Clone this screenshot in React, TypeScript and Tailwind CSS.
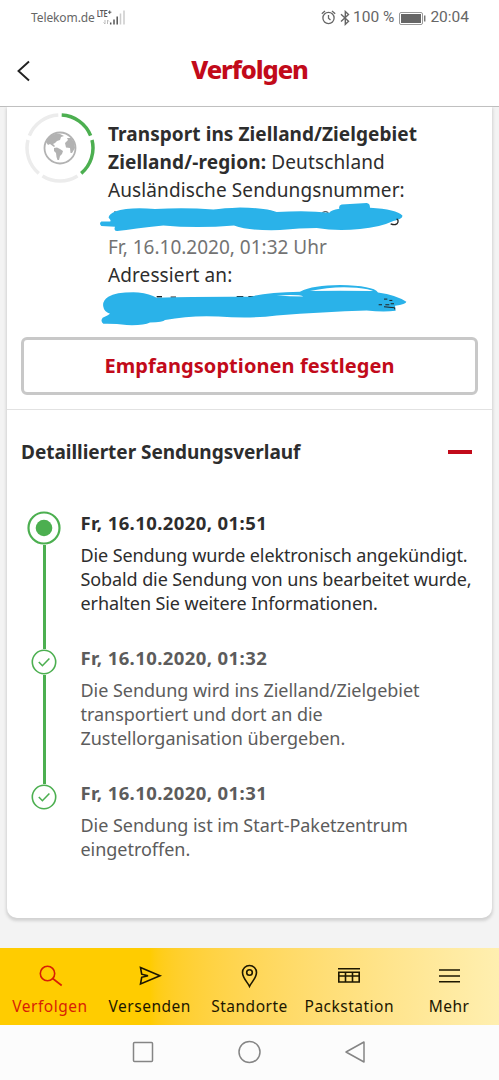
import type { ReactNode } from "react";

const EVENTS = [
  {
    date: "Fr, 16.10.2020, 01:51",
    lines: [
      "Die Sendung wurde elektronisch angekündigt.",
      "Sobald die Sendung von uns bearbeitet wurde,",
      "erhalten Sie weitere Informationen.",
    ],
    current: true,
  },
  {
    date: "Fr, 16.10.2020, 01:32",
    lines: [
      "Die Sendung wird ins Zielland/Zielgebiet",
      "transportiert und dort an die",
      "Zustellorganisation übergeben.",
    ],
  },
  {
    date: "Fr, 16.10.2020, 01:31",
    lines: ["Die Sendung ist im Start-Paketzentrum", "eingetroffen."],
  },
];

function StatusBar() {
  return (
    <div className="flex h-9 shrink-0 items-center justify-between pr-[30px] pl-[31px] font-[Roboto,sans-serif] text-[#666]">
      <div className="flex items-center gap-[2px]">
        <span className="font-['Noto_Sans',sans-serif] text-[12px] tracking-[-0.1px]">Telekom.de</span>
        <svg width="29" height="18" viewBox="0 0 29 18">
          <text x="0" y="7.800" fontSize="9" fontWeight="700" fill="#555" textLength="10.500" lengthAdjust="spacingAndGlyphs">
            LTE
          </text>
          <path d="M11 3.200h3.400M12.700 1.500v3.400" stroke="#555" />
          <path d="M8 11v4M6.500 13.500 8 15M10.500 15v-4M12 12.500 10.500 11" stroke="#bbb" fill="none" />
          <path d="M13.700 15.500v-2M17 15.500v-5M20.200 15.500v-8" stroke="#555" strokeWidth="1.500" />
          <path d="M23.500 15.500v-11M27 15.500v-14" stroke="#ccc" strokeWidth="1.500" />
        </svg>
      </div>
      <div className="flex items-center text-[15.500px]">
        <svg width="15" height="16" viewBox="0 0 15 16" fill="none" stroke="currentColor" strokeWidth="1.300">
          <circle cx="7.500" cy="8" r="5.600" />
          <path d="M7.500 5v3.300l2 1.700M.8 3.700 4 1M14.200 3.700 11 1" />
        </svg>
        <svg className="ml-1" width="11" height="16" viewBox="0 0 11 16" fill="none" stroke="currentColor" strokeWidth="1.400">
          <path d="M1 4.200 8.500 11.300 5.300 14.300V1.500L8.500 4.500 1 11.600" />
        </svg>
        <span className="ml-[2px] whitespace-nowrap">100 %</span>
        <svg className="ml-[5px]" width="27" height="13" viewBox="0 0 27 13">
          <rect x=".5" y=".5" width="23" height="12" rx="1.500" fill="none" stroke="#999" />
          <rect x="2" y="2" width="20" height="9" fill="#666" />
          <path d="M25.700 3.500v6" stroke="#777" strokeWidth="1.500" />
        </svg>
        <span className="ml-1">20:04</span>
      </div>
    </div>
  );
}

function Globe() {
  return (
    <svg className="shrink-0" width="70" height="70" viewBox="-35 -35 70 70" fill="none">
      <g strokeWidth="3.500">
        <path d="M1.700 -32.950A33 33 0 0 1 30.600 -12.400" stroke="#4caf50" />
        <path d="M32 -8A33 33 0 0 1 21.200 25.300" stroke="#4caf50" />
        <path d="M17.500 28A33 33 0 0 1 -17.500 28" stroke="#ececec" />
        <path d="M-21.200 25.300A33 33 0 0 1 -32 -8" stroke="#ececec" />
        <path d="M-30.600 -12.400A33 33 0 0 1 -1.700 -32.950" stroke="#ececec" />
      </g>
      <circle r="15.500" stroke="#b2b2b2" strokeWidth="1.800" />
      <g fill="#b2b2b2">
        <path d="M-14-6-10-12-4-14.500 0-14 4-12 1-11 0-8-3-7-5-5-7-4-5-2-6-1-10-4-12-3Z" />
        <path d="M-6 0-3-.5 0 1 3 3 2 6 0 8-1 12-2.500 12-3.500 9-4 5-6 3Z" />
        <path d="M5-5 8-8 7-10 11-10 14-6 15 0 12 5 10.500 5 10 0 6-.5Z" />
      </g>
    </svg>
  );
}

function NumberScribble() {
  return (
    <svg className="-ml-[18px] block h-[28.200px] w-[330px] overflow-visible" viewBox="0 27 990 84">
      <path d="M75 45v10M532 48q11-5 20 0M697 49q10-5 18 0" stroke="#222" strokeWidth="3" fill="none" />
      <path
        d="M34 76Q26 82 34 90L75 92Q70 106 82 105Q130 98 220 88Q320 98 432 88Q480 105 570 102Q630 96 680 96Q740 106 810 99Q870 94 910 75Q940 68 937 58Q920 40 840 35Q840 22 830 21L755 25Q745 28 748 38Q722 42 718 50Q650 42 560 48Q530 36 450 34Q400 36 370 40Q280 34 195 39Q120 32 75 46Q55 55 56 65Q65 75 60 76Z"
        fill="#2ab2e9"
      />
      <path d="M902 83Q920 90 924 78Q926 72 920 68" stroke="#222" strokeWidth="4" fill="none" />
    </svg>
  );
}

function AddressScribble() {
  return (
    <svg className="-ml-[18px] block h-[28.200px] w-[330px] overflow-visible" viewBox="0 282 990 84">
      <path d="M200 305h16M242 306h16M440 305h20M475 305h16M628 305h12" stroke="#222" strokeWidth="4" />
      <path
        d="M40 335Q36 318 55 305Q80 290 145 292Q180 296 200 308Q330 304 480 305Q530 292 630 290Q670 270 750 270Q850 272 864 292Q920 300 949 320Q948 328 915 332L917 347Q880 352 830 346Q700 350 560 361Q480 372 385 364Q300 360 225 375Q220 382 180 382Q160 392 110 390Q75 385 40 386Q30 378 38 368Q55 360 60 356Q42 350 40 335Z"
        fill="#2ab2e9"
      />
      <path d="M560 301Q630 298 640 304Q600 304 560 301ZM660 288Q730 272 800 278Q840 282 850 288Q750 286 660 288Z" fill="#fff" />
      <path d="M882 312h10M898 316h9M866 329h10M886 329h12M902 326h10M882 335l32 3v5" stroke="#222" strokeWidth="3" fill="none" />
    </svg>
  );
}

function Shipment() {
  return (
    <section className="border-b border-[#e2e2e2] px-[14px] pt-[6px] pb-[14px]">
      <div className="flex h-[224px] gap-[13px] pl-[4px]">
        <Globe />
        <div className="pt-[7px] text-[19px] leading-[28.200px] tracking-[0.1px] whitespace-nowrap text-[#2d2d2d]">
          <p className="font-bold tracking-[0.07px]">Transport ins Zielland/Zielgebiet</p>
          <p className="tracking-[0.14px]">
            <b>Zielland/-region:</b> Deutschland
          </p>
          <p>Ausländische Sendungsnummer:</p>
          <NumberScribble />
          <p className="tracking-normal text-[#737373]">Fr, 16.10.2020, 01:32 Uhr</p>
          <p>Adressiert an:</p>
          <AddressScribble />
        </div>
      </div>
      <button className="block h-[58px] w-full rounded-md border-[3px] border-[#c8c8c8] text-[20px] font-bold tracking-[0.08px] text-[#c20a1a]">
        Empfangsoptionen festlegen
      </button>
    </section>
  );
}

function Marker({ current }: { current?: boolean }) {
  if (current) {
    return (
      <svg className="block shrink-0" width="34" height="34" viewBox="0 0 34 34">
        <circle cx="17" cy="17" r="15.500" fill="#fff" stroke="#4caf50" strokeWidth="2.200" />
        <circle cx="17" cy="17" r="8.300" fill="#4caf50" />
      </svg>
    );
  }
  return (
    <svg className="block shrink-0" width="26" height="26" viewBox="0 0 26 26" fill="none" stroke="#4caf50">
      <circle cx="13" cy="13" r="11.700" strokeWidth="1.600" />
      <path d="m7.800 13 3.600 3.700 7-7.200" strokeWidth="1.600" />
    </svg>
  );
}

function History() {
  return (
    <section className="px-[14px]">
      <div className="flex h-[84px] items-center justify-between pr-[6px]">
        <h2 className="text-[19px] font-bold tracking-[-0.03px] whitespace-nowrap text-[#2d2d2d]">
          Detaillierter Sendungsverlauf
        </h2>
        <span className="h-1 w-6 bg-[#c20a1a]" />
      </div>
      <ol className="pt-[17px]">
        {EVENTS.map((event, i) => (
          <li key={event.date} className={`flex gap-[19.500px] pl-[6px] ${i < 2 ? "h-[135px]" : ""}`}>
            <div className={`flex w-[34px] flex-col items-center ${event.current ? "" : "pt-[3px]"}`}>
              <Marker current={event.current} />
              {i < 2 && <span className={`w-[3px] shrink-0 bg-[#4caf50] ${i === 0 ? "h-[104px]" : "h-[109px]"}`} />}
            </div>
            <div
              className={`text-[18px] leading-6 whitespace-nowrap ${event.current ? "tracking-[-0.1px] text-[#2d2d2d]" : "tracking-[-0.03px] text-[#5c5c5c]"}`}
            >
              <h3 className="mb-[8px] text-[18.500px] font-bold tracking-[0.4px]">{event.date}</h3>
              {event.lines.map((line) => (
                <p key={line}>{line}</p>
              ))}
            </div>
          </li>
        ))}
      </ol>
    </section>
  );
}

function Tab({ label, active, children }: { label: string; active?: boolean; children: ReactNode }) {
  return (
    <a className={`flex flex-1 flex-col items-center pt-[15px] ${active ? "text-[#d81e05]" : "text-[#1d1700]"}`}>
      <svg width="26" height="26" viewBox="0 0 26 26" fill="none" stroke="currentColor" strokeWidth="1.600">
        {children}
      </svg>
      <span className="mt-[5px] text-[15.500px] leading-6 tracking-[0.5px] whitespace-nowrap">{label}</span>
    </a>
  );
}

function TabBar() {
  return (
    <nav className="flex h-[77px] shrink-0 bg-linear-to-r from-[#ffcc00] from-30% to-[#ffefb0]">
      <Tab label="Verfolgen" active>
        <circle cx="10.500" cy="10.500" r="7.200" />
        <path d="m15.700 15.500 9 7" />
      </Tab>
      <Tab label="Versenden">
        <path d="M3.500 4.500 23 12.700 3.500 21 4.700 14.300 11 12.700 4.700 11.200Z" />
      </Tab>
      <Tab label="Standorte">
        <path d="M13.500 23.300C12 20 6.500 15 6.500 9.500a7 7 0 0 1 14 0C20.500 15 15 20 13.500 23.300Z" />
        <circle cx="13.500" cy="9.500" r="2.800" />
      </Tab>
      <Tab label="Packstation">
        <path d="M2 5.800h22M2.800 9.300h20.400v9.700h-20.400ZM2 13h22M9.500 9.500v9.500M16.500 9.500v9.500" />
      </Tab>
      <Tab label="Mehr">
        <path d="M3 7h21M3 13h21M3 18.700h21" />
      </Tab>
    </nav>
  );
}

function SystemNav() {
  return (
    <div className="flex flex-1 items-center justify-center gap-[82px] bg-[#fcfcfc] pr-px pb-px">
      <svg width="24" height="24" viewBox="0 0 24 24" fill="none" stroke="#858585" strokeWidth="1.500">
        <rect x="2.500" y="2.500" width="19" height="19" rx="1" />
      </svg>
      <svg width="24" height="24" viewBox="0 0 24 24" fill="none" stroke="#858585" strokeWidth="1.500">
        <circle cx="12.500" cy="12" r="10.500" />
      </svg>
      <svg width="24" height="24" viewBox="0 0 24 24" fill="none" stroke="#858585" strokeWidth="1.500" strokeLinejoin="round">
        <path d="M21 2v20L3 12Z" />
      </svg>
    </div>
  );
}

export default function App() {
  return (
    <div className="flex h-[1080px] w-[499px] flex-col overflow-hidden bg-white font-['Noto_Sans',sans-serif]">
      <StatusBar />
      <header className="grid h-[71px] shrink-0 grid-cols-[60px_1fr_60px] items-center border-b border-[#bdbdbd]">
        <svg className="ml-[16px]" width="16" height="22" viewBox="0 0 16 22" fill="none" stroke="#222" strokeWidth="1.900">
          <path d="M13 1.500 2.500 11 13 20.500" />
        </svg>
        <h1 className="pb-[3px] text-center text-[25.500px] font-extrabold tracking-[-1.100px] text-[#c20a1a]">Verfolgen</h1>
      </header>
      <main className="h-[841px] shrink-0 bg-[#f3f3f3] px-[7px]">
        <div className="h-[811px] rounded-b-[10px] bg-white shadow-[0_2px_3px_1px_#d2d2d2]">
          <Shipment />
          <History />
        </div>
      </main>
      <TabBar />
      <SystemNav />
    </div>
  );
}
